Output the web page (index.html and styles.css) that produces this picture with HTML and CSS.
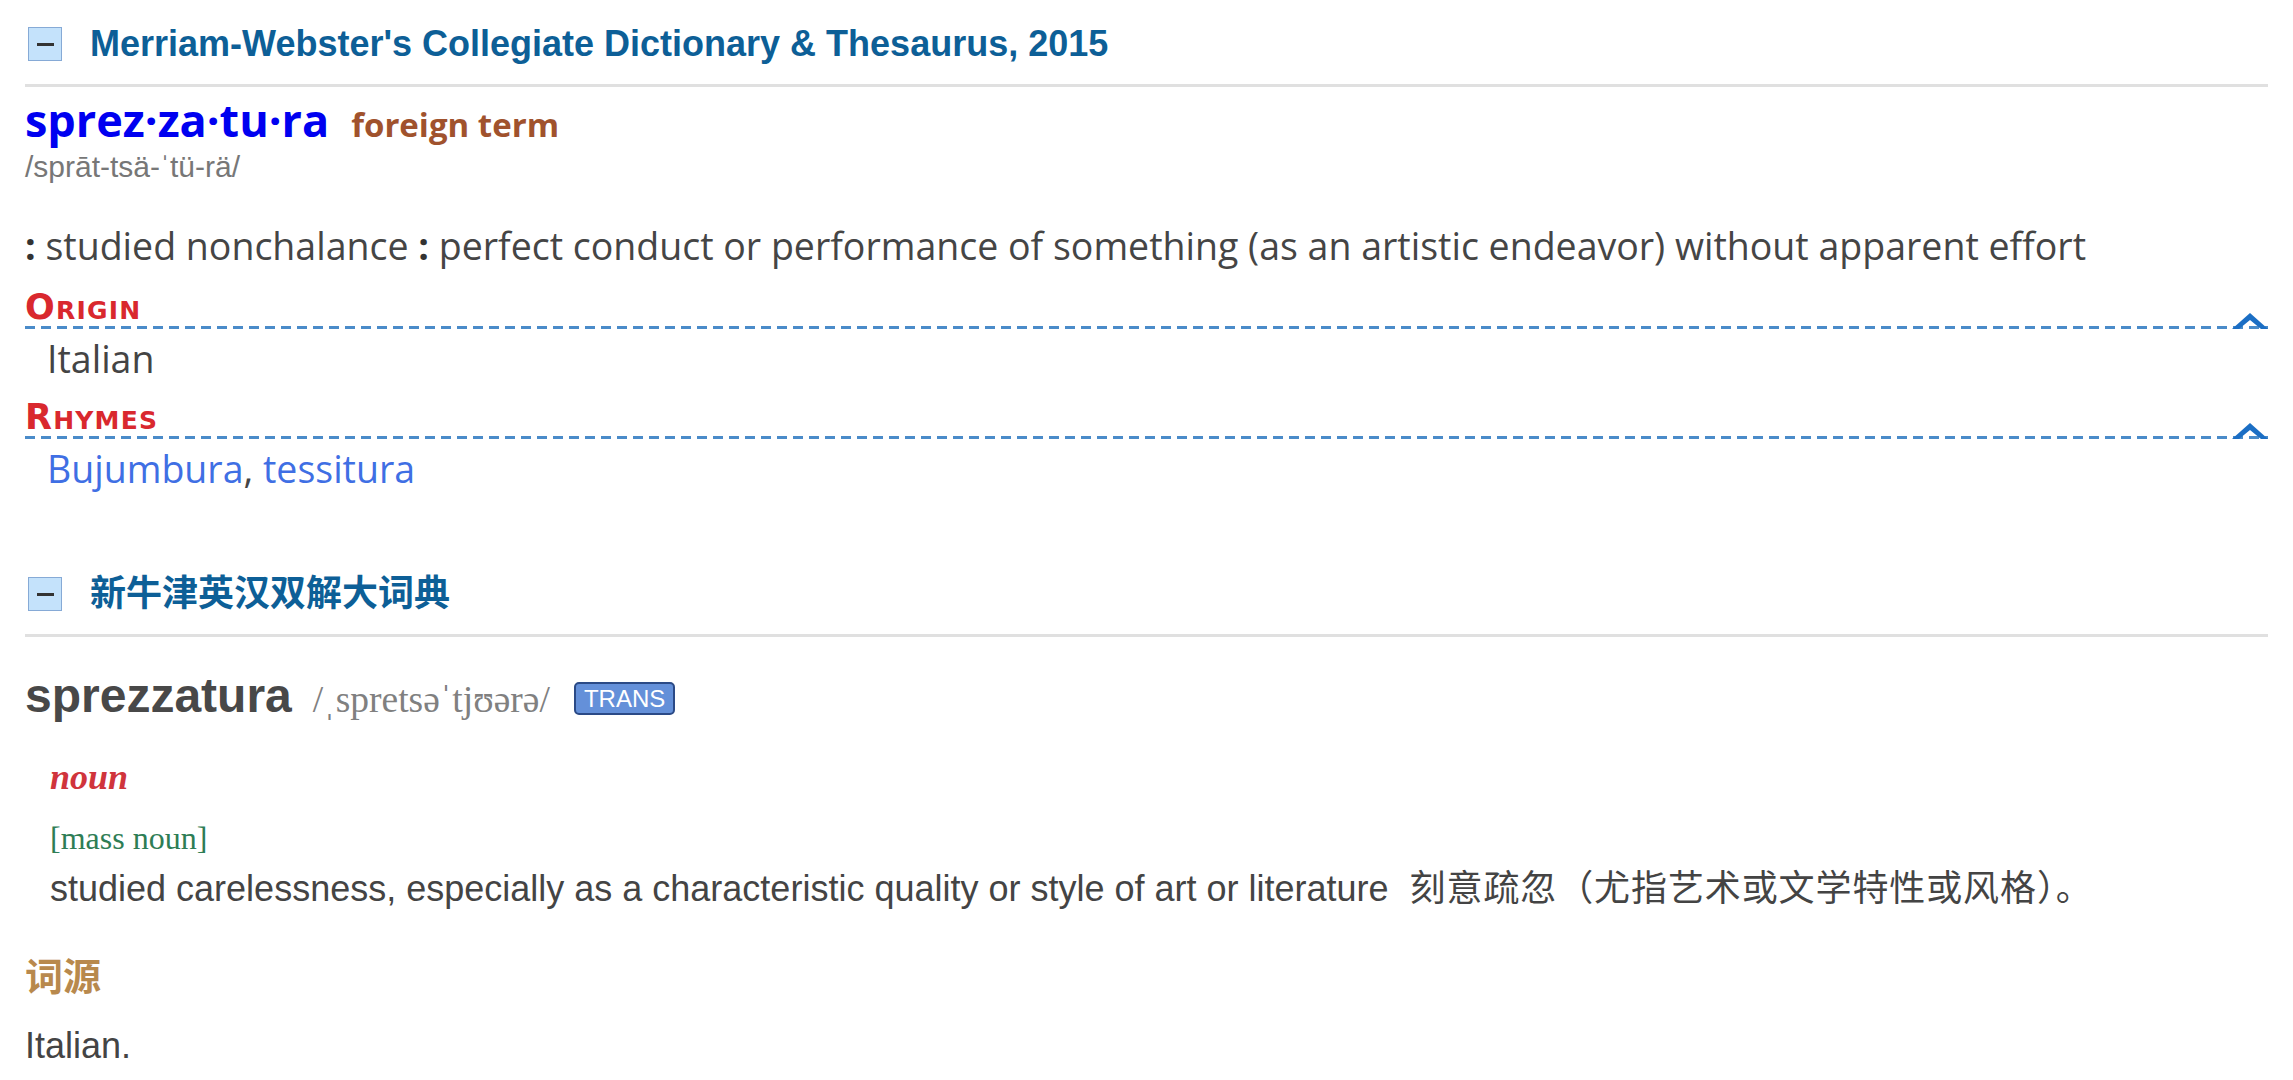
FILE: index.html
```html
<!DOCTYPE html>
<html lang="en">
<head>
<meta charset="utf-8">
<title>sprezzatura</title>
<link rel="stylesheet" href="styles.css">
</head>
<body>
<section class="dict dict-mw">
  <div class="dict-head">
    <span class="toggle"><span class="toggle-bar"></span></span>
    <span class="dict-title">Merriam-Webster's Collegiate Dictionary &amp; Thesaurus, 2015</span>
  </div>
  <div class="mw-entry">
    <div class="hw-row"><span class="mw-hw">sprez·za·tu·ra</span><span class="mw-fl">foreign term</span></div>
    <div class="mw-pr">/sprāt-tsä-ˈtü-rä/</div>
    <div class="mw-def"><b class="colon">:</b> studied nonchalance <b class="colon">:</b> perfect conduct or performance of something (as an artistic endeavor) without apparent effort</div>
    <div class="mw-sec">
      <div class="sec-head">
        <span class="sec-label">Origin</span>
        <svg class="chev" width="36" height="18" viewBox="0 0 36 18"><polygon points="0,17 18,1 36,17 29,17 18,8 7,17"/></svg>
      </div>
      <div class="dash"></div>
      <div class="sec-body">Italian</div>
    </div>
    <div class="mw-sec">
      <div class="sec-head">
        <span class="sec-label">Rhymes</span>
        <svg class="chev" width="36" height="18" viewBox="0 0 36 18"><polygon points="0,17 18,1 36,17 29,17 18,8 7,17"/></svg>
      </div>
      <div class="dash"></div>
      <div class="sec-body"><a class="rhyme">Bujumbura</a>, <a class="rhyme">tessitura</a></div>
    </div>
  </div>
</section>

<section class="dict dict-ox">
  <div class="dict-head">
    <span class="toggle"><span class="toggle-bar"></span></span>
    <span class="dict-title">新牛津英汉双解大词典</span>
  </div>
  <div class="ox-hw-row">
    <span class="ox-hw">sprezzatura</span>
    <span class="ox-pr">/ˌspretsəˈtjʊərə/</span>
    <span class="badge">TRANS</span>
  </div>
  <div class="ox-body">
    <div class="pos">noun</div>
    <div class="gram">[mass noun]</div>
    <div class="ox-def">studied carelessness, especially as a characteristic quality or style of art or literature<span class="zh">刻意疏忽（尤指艺术或文学特性或风格）。</span></div>
  </div>
  <div class="etym-head">词源</div>
  <div class="etym-body">Italian.</div>
</section>
</body>
</html>
```
FILE: styles.css
```css
html, body {
  margin: 0;
  padding: 0;
  background: #ffffff;
}

body {
  padding: 0 25px;
  font-family: "Liberation Sans", Arial, "Noto Sans CJK SC", sans-serif;
  color: #444444;
}

.dict-head {
  display: flex;
  align-items: center;
  gap: 28px;
  padding: 26px 0 22px 3px;
  border-bottom: 3px solid #e0e0e0;
}

.toggle {
  box-sizing: border-box;
  width: 34px;
  height: 34px;
  background: #c4e2fb;
  border: 1px solid #86aad6;
  display: flex;
  align-items: center;
  justify-content: center;
}

.toggle-bar {
  width: 17px;
  height: 3px;
  background: #333333;
}

.dict-title {
  font: 700 36px/36px "Liberation Sans", Arial, "Noto Sans CJK SC", sans-serif;
  color: #0d5f97;
}

/* Merriam-Webster */
.mw-entry {
  padding-top: 8px;
}

.hw-row {
  display: flex;
  align-items: baseline;
}

.mw-hw {
  font: 700 45px/50px "Open Sans", sans-serif;
  color: #0000f0;
}

.mw-fl {
  font: 700 33px/50px "Open Sans", sans-serif;
  color: #a0522d;
  margin-left: 22px;
}

.mw-pr {
  font: 30px/34px "Liberation Sans", Arial, sans-serif;
  color: #777777;
}

.mw-def {
  margin-top: 40px;
  font: 37.5px/44px "Open Sans", sans-serif;
  color: #454545;
}

.colon {
  font-weight: 700;
  color: #333333;
}

.mw-sec {
  margin-top: 20px;
}

.mw-sec + .mw-sec {
  margin-top: 17px;
}

.sec-head {
  display: flex;
  justify-content: space-between;
  align-items: flex-end;
}

.sec-label {
  font: 700 35px/38px "DejaVu Sans", sans-serif;
  font-variant: small-caps;
  letter-spacing: 1.2px;
  color: #d9282e;
}

.chev {
  display: block;
  margin-bottom: -4px;
  position: relative;
  z-index: 1;
  fill: #1b6ec4;
}

.dash {
  height: 3px;
  background: repeating-linear-gradient(to right, #4a8bc9 0 10px, transparent 10px 16px);
}

.sec-body {
  margin-top: 8px;
  padding-left: 22px;
  font: 37.5px/44px "Open Sans", sans-serif;
  color: #444444;
}

.rhyme {
  color: #3f6fe4;
  text-decoration: none;
}

/* Oxford */
.dict-ox {
  margin-top: 59px;
}

.ox-hw-row {
  display: flex;
  align-items: baseline;
  margin-top: 31px;
}

.ox-hw {
  font: 700 48px/56px "Liberation Sans", Arial, sans-serif;
  color: #484848;
}

.ox-pr {
  margin-left: 21px;
  font: 37.5px/56px "Liberation Serif", "DejaVu Serif", serif;
  color: #808080;
}

.badge {
  align-self: center;
  margin-left: 24px;
  padding: 0 8px;
  border: 2px solid #2b4a86;
  border-radius: 5px;
  background: #6490d9;
  color: #ffffff;
  font: 24px/29px "Liberation Sans", Arial, sans-serif;
}

.ox-body {
  padding-left: 25px;
}

.pos {
  margin-top: 29px;
  font: italic 700 36px/40px "Liberation Serif", serif;
  color: #d0343c;
}

.gram {
  margin-top: 22px;
  font: 32px/38px "Liberation Serif", serif;
  color: #2e7d55;
}

.ox-def {
  margin-top: 6px;
  font: 36px/44px "Liberation Sans", Arial, "Noto Sans CJK SC", sans-serif;
  color: #444444;
}

.zh {
  margin-left: 21px;
  letter-spacing: 0.9px;
  font-family: "Noto Sans CJK SC", sans-serif;
}

.etym-head {
  margin-top: 40px;
  font: 700 38px/46px "Noto Sans CJK SC", sans-serif;
  color: #b8894d;
}

.etym-body {
  margin-top: 27px;
  font: 36px/44px "Liberation Sans", Arial, sans-serif;
  color: #444444;
}
```
